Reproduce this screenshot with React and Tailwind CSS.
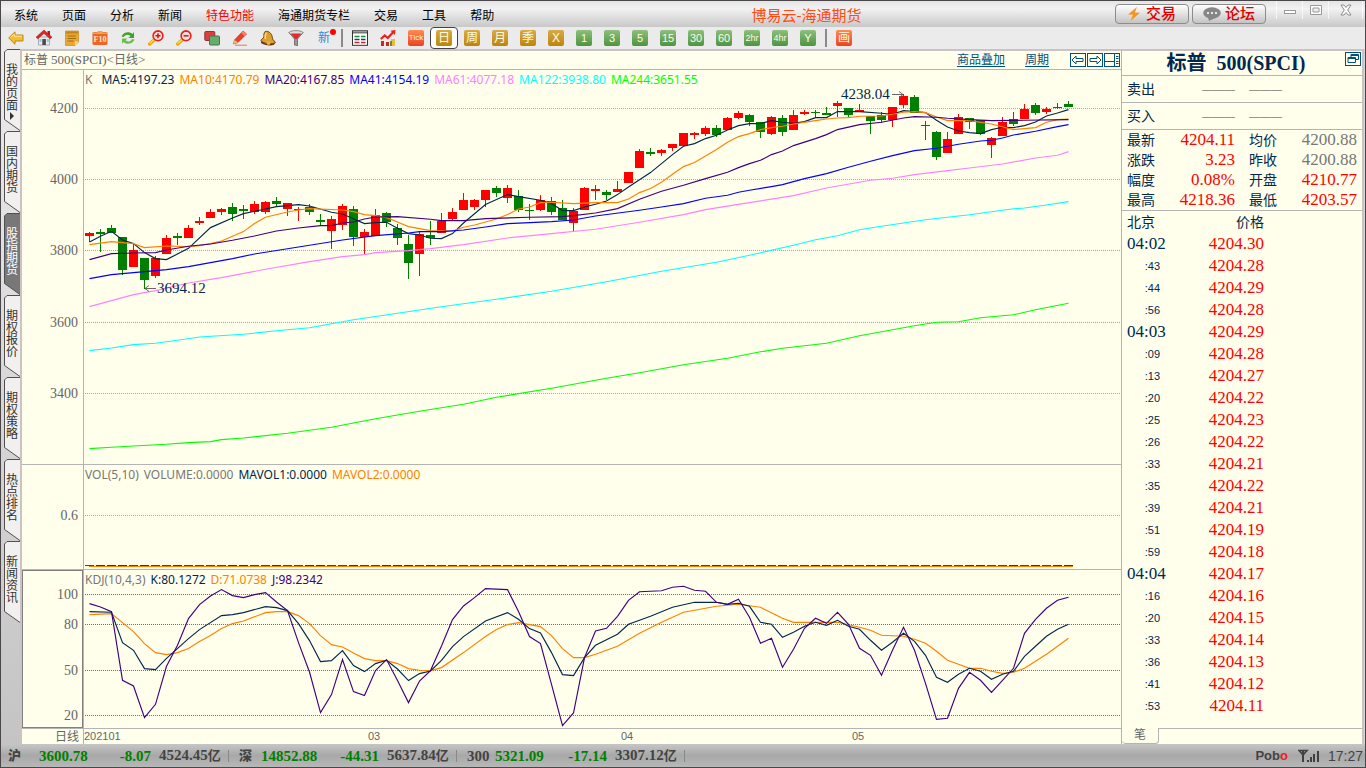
import React from "react";

const MENU = ["系统", "页面", "分析", "新闻", "特色功能", "海通期货专栏", "交易", "工具", "帮助"];

// [direction, body top, body bottom, high, low]
const CANDLES = [
  ["r", 233, 236, 232, 242], ["g", 232, 234, 229, 252], ["g", 228, 233, 225, 233], ["g", 237, 270, 237, 275],
  ["r", 250, 267, 244, 267], ["g", 258, 280, 258, 289], ["r", 258, 276, 256, 278], ["r", 238, 254, 235, 254],
  ["g", 236, 238, 233, 245], ["r", 228, 238, 225, 238], ["r", 221, 223, 217, 225], ["r", 212, 218, 209, 218],
  ["r", 209, 212, 208, 215], ["g", 207, 214, 203, 221], ["g", 209, 211, 205, 219], ["r", 204, 212, 201, 214],
  ["r", 202, 212, 201, 214], ["g", 201, 204, 197, 207], ["r", 203, 209, 203, 216], ["r", 209, 210, 207, 221],
  ["g", 207, 212, 204, 215], ["g", 220, 222, 214, 226], ["r", 219, 231, 216, 249], ["r", 206, 225, 204, 230],
  ["g", 209, 237, 206, 246], ["r", 232, 237, 229, 254], ["r", 215, 236, 209, 236], ["g", 213, 222, 212, 227],
  ["g", 228, 238, 224, 245], ["g", 244, 263, 235, 279], ["r", 234, 254, 232, 276], ["g", 235, 238, 221, 245],
  ["r", 221, 233, 213, 233], ["r", 212, 219, 208, 220], ["r", 200, 210, 193, 210], ["r", 200, 207, 199, 210],
  ["r", 190, 200, 190, 207], ["g", 188, 193, 186, 197], ["r", 188, 198, 185, 203], ["g", 196, 210, 190, 212],
  ["g", 210, 211, 204, 220], ["r", 200, 210, 195, 211], ["g", 201, 212, 197, 215], ["g", 208, 220, 200, 220],
  ["r", 211, 223, 208, 232], ["r", 188, 210, 187, 210], ["r", 189, 191, 185, 200], ["g", 192, 195, 190, 200],
  ["r", 189, 192, 181, 192], ["r", 172, 183, 172, 183], ["r", 151, 168, 149, 168], ["g", 152, 154, 148, 156],
  ["r", 150, 153, 149, 156], ["r", 144, 148, 144, 151], ["r", 133, 146, 133, 146], ["r", 133, 135, 132, 139],
  ["r", 128, 134, 126, 136], ["g", 128, 135, 125, 137], ["r", 118, 130, 117, 130], ["r", 113, 118, 111, 119],
  ["g", 115, 122, 114, 126], ["g", 122, 132, 122, 138], ["r", 117, 134, 116, 135], ["g", 118, 132, 115, 136],
  ["r", 115, 130, 110, 130], ["r", 112, 114, 110, 115], ["g", 112, 113, 110, 117], ["g", 113, 115, 107, 115],
  ["r", 103, 106, 101, 117], ["g", 108, 115, 108, 117], ["r", 110, 112, 104, 112], ["g", 116, 121, 116, 134],
  ["g", 115, 120, 112, 123], ["r", 107, 120, 107, 127], ["r", 96, 105, 94, 108], ["g", 97, 113, 95, 113],
  ["r", 125, 126, 121, 140], ["g", 132, 157, 131, 160], ["r", 139, 153, 132, 153], ["r", 117, 134, 114, 134],
  ["g", 118, 122, 118, 129], ["g", 120, 134, 120, 135], ["r", 138, 145, 137, 158], ["r", 122, 136, 117, 136],
  ["g", 119, 124, 112, 126], ["r", 109, 119, 104, 119], ["g", 105, 113, 103, 115], ["r", 109, 112, 107, 114],
  ["g", 107, 108, 103, 109], ["g", 104, 107, 101, 107],
];

// Series as "bar:y" pairs
const MA5 = "0:241.7 1:236 2:231 3:239.7 4:243.3 5:252.3 6:258.3 7:259.3 9:248 11:227.3 13:217.7 14:213.3 16:208.7 17:206.3 19:204.3 20:205.7 22:212 23:213.7 25:223.3 26:222.3 27:222 28:228 29:233.3 30:234.7 31:238 32:238.3 33:233.3 34:222.7 36:204.3 38:194.3 39:196.3 41:200 42:203.3 43:210.3 44:210.3 45:206.7 46:204 47:200.7 48:194.3 49:186.7 51:172.3 53:154.3 54:146 55:143.3 56:138.3 57:135 58:129.7 59:125.3 60:123.3 61:123.3 62:120.3 63:122 64:123 65:121.3 66:117.3 67:117.3 68:111.3 70:111.3 72:113 73:114 74:110.3 75:111.3 76:112.3 77:120 78:126.7 79:130.7 80:132.3 81:133.3 82:129.3 83:127 84:127.3 85:125.3 86:121.7 87:115.7 88:112.7 89:109.3";
const MA10 = "0:244.3 2:241.3 3:242.3 4:243.3 5:247.3 7:245.7 9:246.3 10:245.3 11:243.3 12:240.7 14:231.3 15:223.3 16:217 18:211.7 19:209.7 20:208.3 23:209.7 24:211.3 25:214.3 26:215.3 27:217.3 28:221.7 29:226.3 31:230.3 33:230.7 34:227 35:224.7 37:218.7 38:214.3 39:208.7 40:206.7 41:202.3 42:202 44:203.3 46:202.3 48:202.3 49:198.7 50:192.3 51:188.3 52:182 53:174 54:166.3 55:162.3 57:149.3 58:142 59:136.3 60:133.3 61:129.3 62:127.3 63:126 64:123.7 66:120.3 67:118.7 68:117.7 69:117.3 70:116 72:115.7 73:114 74:112 75:111.3 76:112.3 77:116.7 78:120.3 80:120.3 82:123.7 84:129.3 86:127.3 87:122 88:119.3 89:118.7";
const MA20 = "0:259.3 2:253.3 4:252.7 6:252.3 7:249.7 9:246 11:243.7 13:240 15:235.7 17:230.7 19:227.7 21:225.3 22:225.3 23:222.7 24:221.7 25:218.7 26:216.7 28:216.3 31:219 32:220.3 34:220.3 36:218.3 40:217 43:216.3 44:215.3 46:212.7 48:208.3 50:199 52:191 54:185 56:178.3 58:172 59:167.3 60:163.3 61:160 62:154.3 63:150.7 64:145.3 66:138.3 67:134.3 68:129.3 70:124.3 72:122 74:117.7 75:116.3 77:117 78:118 80:119.3 82:120.3 85:120 89:119.3";
const MA41 = "0:278.3 2:274.3 5:271.3 7:269.3 9:266.3 13:258.3 15:253.7 19:246.7 23:239.7 26:235.3 29:232.7 30:231.3 32:231.3 34:229.7 36:226.7 38:223.3 42:221.3 44:219.7 46:215.7 50:210 52:206.7 54:203.3 56:198 58:195 59:192 60:190 62:186.3 63:184.3 65:178.3 67:173.3 69:167 71:161 73:155.3 75:150.3 77:148 79:144 81:140.7 82:140 83:137.7 84:134.7 86:131 88:126.3 89:124.3";
const MA61 = "0:306.3 2:300.3 4:294.3 6:290.3 9:282.7 12:277.3 16:269 20:261.3 23:256.3 25:254.3 26:252.3 29:250.3 31:248.3 34:244.3 38:237.7 42:233.3 46:229 50:222 54:214.3 56:209.3 60:202.3 64:195.3 67:187.7 71:180 73:178 75:174.3 78:170.3 80:167.7 83:163.7 86:157.7 88:155 89:151.3";
const MA122 = "0:350.3 2:347.7 4:344.3 6:343 8:340 10:336.7 14:334 17:330.5 20:327.5 24:319.5 28:313 32:306.5 37:299 42:291 47:281.5 52:271 57:262 60:255 64:245 66:239.5 68:235.5 70:229.5 72:226 76:219.5 80:214.5 84:208.5 85:207.7 87:204.7 89:201.3";
const MA244 = "0:448.3 2:447 4:445.7 7:444 9:442.3 11:441.3 12:439.3 14:437.7 18:433 22:427 26:418.5 30:411 34:404 37:397 42:388 47:378 50:372.5 54:364.5 58:358 61:351.5 63:348 67:343 70:335.5 75:325.5 77:322 79:321.5 81:317.5 84:314.5 86:309.5 89:303";
const K = "0:611.3 2:612 3:642.3 4:650 5:668.3 6:669.3 7:658 9:638.3 10:629.3 12:615.3 13:614.3 14:612.3 16:606.3 17:607.3 18:610.3 19:623.3 20:640.3 21:661.3 22:660.3 23:650.3 24:665.3 25:671.3 26:663.3 27:660 28:668.7 29:680.3 30:673.3 31:670.7 32:660 33:646.3 34:636.3 36:620.7 38:612.3 39:619 40:628.3 41:632.7 42:652.3 43:674.3 44:675.3 45:657.3 46:645 48:634 49:624 51:616 53:607 55:602 57:602 58:604 59:603 60:606 61:622 62:624 63:637 64:632 65:626 66:622 67:625 68:620 69:626 70:629 71:640 72:650 73:642 74:633 75:641 76:655 77:677 78:682 79:674 80:668 81:671 82:679 83:674 84:671 85:656 86:646 87:636 88:629 89:624";
const D = "0:614.3 2:613.3 3:622.3 4:631.3 5:643.3 6:652.3 7:654.3 8:652.3 9:648.3 10:641.3 11:635.3 12:628.3 13:623.3 14:620.7 16:612.3 17:611.3 18:611.3 19:615.3 20:623.3 21:635.3 22:644.3 23:646.7 24:652.7 25:658.3 26:660.3 27:660.3 28:663.3 29:668.3 30:670 31:670.3 32:667.3 34:652.3 36:636.3 37:629.3 38:624.3 39:622.3 40:624.3 41:626.3 42:635.3 43:648.3 44:657.3 45:657.3 46:654 48:646 50:633 52:622 54:612 57:606 59:604 61:607 63:618 64:622 66:622 68:622 70:627 71:630 72:635 74:636 75:639 76:643 77:651 78:660 79:664 80:668 81:668 82:671 83:673 84:672 85:668 86:661 87:654 88:646 89:638";
const J = "0:603.3 1:606.7 2:611.3 3:680 4:685.7 5:717.3 6:704 7:666 8:645 9:618.3 10:604.3 11:595.7 12:589.3 13:595.3 14:597.3 15:594.3 16:592.3 17:601.7 18:610.3 19:642.3 20:671.7 21:712.3 22:694.3 23:659.3 24:691.3 25:695.3 26:670.3 27:659.3 28:680.3 29:702.3 30:680.7 31:670.3 32:645.7 33:619.3 34:605.7 35:597.3 36:588.3 38:589.3 39:611.3 40:636.3 41:643.3 42:684 43:725.3 44:712.7 45:657.3 46:630.7 47:628 48:616 49:600 50:591.5 52:590.5 53:587 54:586 55:590 56:591 57:602 58:604 59:599 60:617 61:643 62:638 63:667 64:649 65:628 66:618 67:623 68:612 69:624 70:648 71:655 72:675 73:650 74:627 75:650 76:683 77:719 78:718 79:688 80:672 81:680 82:692 83:680 84:668 85:633 86:619 87:608 88:600 89:597";

const toPoints = (series) =>
  series
    .split(" ")
    .map((p) => {
      const [i, y] = p.split(":");
      return `${67.5 + 11 * Number(i)},${Number(y) + 0.3}`;
    })
    .join(" ");

const NAVY = "#002850";

function Line({ series, color }) {
  return <polyline points={toPoints(series)} fill="none" stroke={color} strokeWidth="1.15" />;
}

function Grid({ y, label, dark }) {
  return (
    <g>
      <line x1="63" x2="100%" y1={y + 0.5} y2={y + 0.5} stroke={dark ? "#707070" : "#a8a8a8"} strokeDasharray="1 1" shapeRendering="crispEdges" />
      <text x="56" y={y + 5} textAnchor="end" fontSize="14" fill="#666">{label}</text>
    </g>
  );
}

function Panel({ top, heightClass, legend, children, label }) {
  return (
    <section aria-label={label} className={`relative ${heightClass}`}>
      <svg className="block h-full w-full font-['Liberation_Serif','Noto_Sans_CJK_SC',serif]">
        <line x1="61.5" x2="61.5" y1="0" y2="100%" stroke="#b4b4b4" />
        <g transform={`translate(0 ${-top})`}>{children}</g>
      </svg>
      <div className="absolute left-[63px] top-0.5 flex gap-[5px] whitespace-nowrap font-['Noto_Sans',sans-serif] text-[12px] leading-4">
        {legend.map(([t, c]) => (
          <span key={t} className={c}>{t}</span>
        ))}
      </div>
    </section>
  );
}

const SIDE = ["我的页面", "国内期货", "股指期货", "期权报价", "期权策略", "热点排名", "新闻资讯"];

function SideTab({ name, active, arrow }) {
  return (
    <button className={`relative flex h-[82px] w-full flex-col items-center pl-[3px] pt-[15px] text-[12px] leading-3 ${arrow ? "-mt-1" : ""} ${active ? "text-white" : "text-[#333]"}`}>
      <svg className="absolute inset-0 h-[82px] w-[19px]" viewBox="0 0 19 82">
        <path d="M19 .5H6L3.500 3V70.500L19 81.500Z" fill={active ? "#787878" : "#f1f0ee"} />
        <path d="M19 .5H6L3.500 3V70.500L19 81.500" fill="none" stroke="#505050" />
      </svg>
      <span className="relative flex flex-col">
        {[...name].map((c) => (
          <span key={c}>{c}</span>
        ))}
      </span>
      {arrow && <svg className="relative h-2 w-2" viewBox="0 0 8 8"><path d="M2 0l4 4-4 4z" fill="#333" /></svg>}
    </button>
  );
}

const gold = "bg-linear-to-b from-[#d6ab45] to-[#bd8500]";
const green = "bg-linear-to-b from-[#8cc07c] to-[#4d9440]";
const red = "bg-linear-to-b from-[#ff8a50] to-[#ec4022]";
const BADGES = [
  ["Tick", red, "text-[8px]"], ["日", gold, "text-[12px]"], ["周", gold, "text-[12px]"], ["月", gold, "text-[12px]"],
  ["季", gold, "text-[12px]"], ["X", gold, "text-[12px]"], ["1", green, "text-[11px]"], ["3", green, "text-[11px]"],
  ["5", green, "text-[11px]"], ["15", green, "text-[11px]"], ["30", green, "text-[11px]"], ["60", green, "text-[11px]"],
  ["2hr", green, "text-[9px]"], ["4hr", green, "text-[9px]"], ["Y", green, "text-[11px]"],
];

function Badge({ text, tone, size, active }) {
  return (
    <button className={`flex h-[22px] w-7 items-center justify-center ${active ? "rounded border border-[#444] bg-white" : ""}`}>
      <span className={`flex h-4 w-4 items-center justify-center rounded-xs leading-none text-[#fffbe0] ${tone} ${size}`}>{text}</span>
    </button>
  );
}

function Tool({ label, children }) {
  return (
    <button aria-label={label} className="flex h-[22px] w-7 items-center justify-center">
      <svg className="h-4 w-4" viewBox="0 0 16 16">{children}</svg>
    </button>
  );
}

const Sep = () => <span className="mx-[3px] h-[18px] w-0.5 bg-[#8a8a8a]" />;

function Magnifier({ plus }) {
  return (
    <g>
      <path d="M6.500 9.500L1.700 14" stroke="#eda800" strokeWidth="3.400" strokeLinecap="round" />
      <path d="M6.200 9.200L2 13.200" stroke="#ffdc50" strokeWidth="1.200" strokeLinecap="round" />
      <circle cx="10" cy="5.800" r="4.800" fill="#fff" stroke="#e5241c" strokeWidth="1.800" />
      <circle cx="10" cy="5.800" r="3.300" fill="#fbdcd8" />
      <path d={plus ? "M7.500 5.800h5M10 3.300v5" : "M7.500 5.800h5"} stroke="#d41410" strokeWidth="1.500" />
    </g>
  );
}

function Toolbar() {
  return (
    <div className="flex h-[22px] items-center bg-[#ebebeb] pl-px">
      <Tool label="后退">
        <path d="M.7 8L7 1.800V5h8v6H7v3.200z" fill="#f6bd30" stroke="#bf841a" strokeWidth="1" />
        <path d="M2.500 7.700L6.200 4v2.200H14" stroke="#ffe89a" fill="none" />
      </Tool>
      <Tool label="主页">
        <path d="M2.500 7h11v8h-11z" fill="#e8edef" stroke="#889099" strokeWidth=".7" />
        <path d="M11.500 1h2.500v5h-2.500z" fill="#b81914" />
        <path d="M8 0L0 7.200l1.800 1.600L8 3.500l6.200 5.300L16 7.200z" fill="#d82720" stroke="#9b1714" strokeWidth=".5" />
        <path d="M6.300 9h3.600v6H6.300z" fill="#4b4a54" />
        <path d="M3.500 9h2v3h-2zM10.800 9h2v3h-2z" fill="#9ac2dc" />
      </Tool>
      <Tool label="笔记">
        <path d="M1.500 1h13v11L11 15.500H1.500z" fill="#e9a830" stroke="#c88718" strokeWidth=".7" />
        <path d="M2 1.500h12v2H2z" fill="#c68418" />
        <path d="M3.500 6h8.500M3.500 8.500h8.500M3.500 11h6" stroke="#a66a15" />
        <path d="M14.500 11.500H11v4z" fill="#ffdc86" />
      </Tool>
      <Tool label="F10">
        <rect x=".5" y="2" width="15" height="13" rx="1.500" fill="#ed6529" />
        <path d="M.5 4V2.500h5V1h5v1.500h5V4z" fill="#f2a64c" />
        <text x="8" y="12" textAnchor="middle" fontSize="8" fontWeight="700" fill="#ffe9ad" className="font-['Liberation_Serif',serif]">F10</text>
      </Tool>
      <Tool label="刷新">
        <path d="M1.500 6.500C3.500 1.500 9.500 1 12.500 4L14 2v6H8.500l2-2C8.500 4 5 4.300 4 7z" fill="#3fa329" />
        <path d="M14.500 9.500c-2 5-8 5.500-11 2.500L2 14V8.500h5.500l-2 1.800C7.500 12 11 12 12 9z" fill="#6cc04a" />
      </Tool>
      <Tool label="放大"><Magnifier plus /></Tool>
      <Tool label="缩小"><Magnifier /></Tool>
      <Tool label="叠加">
        <rect x=".8" y="1.500" width="10" height="9" rx="1" fill="#dd3d3d" stroke="#8b3538" />
        <rect x="5.500" y="6" width="10" height="9" rx="1" fill="#65ad6c" stroke="#4a7354" />
      </Tool>
      <Tool label="画线">
        <path d="M11 1l3.500 3L6 12.500 1.500 14l1-4z" fill="#e94225" stroke="#a92c18" strokeWidth=".6" />
        <path d="M11 1l3.500 3-2 2L9 2.800z" fill="#ff8068" />
        <path d="M2.500 10L6 12.500 1.500 14z" fill="#e7bd78" />
        <path d="M3 15.200h12" stroke="#e57462" />
      </Tool>
      <Tool label="预警">
        <path d="M5 1.500C9 .5 12.500 4 12.500 9l3 3.500C12 15 4 14 .8 10.500L4 7c-.5-2 0-4 1-5.500z" fill="#dda02e" stroke="#6d3511" strokeWidth=".9" />
        <path d="M6 3c-1 2-1 4-.5 6" stroke="#ffe28a" fill="none" strokeWidth="1.500" />
        <path d="M1 11c3 3 10 4 14 1.800l-1 2c-4 1.500-10 .5-13-1.800z" fill="#6a2e10" />
        <circle cx="8.500" cy="13" r="2" fill="#e1b14c" />
      </Tool>
      <Tool label="过滤">
        <path d="M1 2.500L6.500 9v6l3 .8V9L15 2.500z" fill="#999" stroke="#555" strokeWidth=".7" />
        <ellipse cx="8" cy="2.800" rx="7" ry="2.200" fill="#ddd" stroke="#666" strokeWidth=".7" />
        <path d="M3 3.500h10L8.800 9H7.200z" fill="#e52929" />
      </Tool>
      <button className="relative flex h-[22px] w-7 items-center justify-center text-[12px] leading-none text-[#2b8be6]">
        新
        <i className="absolute right-0.5 top-0.5 h-1.5 w-1.5 rounded-full bg-[#f00]" />
      </button>
      <Sep />
      <Tool label="报价表">
        <rect x=".5" y=".8" width="15" height="14.500" fill="#fff" stroke="#333" />
        <path d="M1 2.500h14" stroke="#777" strokeWidth="2" />
        <path d="M2.500 6.500h5M9 6.500h4.500" stroke="#109030" strokeWidth="1.500" />
        <path d="M2.500 9.500h5M9 9.500h4.500" stroke="#303080" strokeWidth="1.500" />
        <path d="M2.500 12.500h5M9 12.500h4.500" stroke="#d52020" strokeWidth="1.500" />
      </Tool>
      <Tool label="走势">
        <path d="M1 11h3v5H1zM6 12h3v4H6z" fill="#c52923" />
        <path d="M11 9h4v7h-4z" fill="#e9be3d" />
        <path d="M10 11h2v5h-2z" fill="#57933a" />
        <path d="M.8 9l4-3.500 3 2.500 6-6.500" fill="none" stroke="#ea211c" strokeWidth="2.200" />
        <path d="M10.500.8L15.500 0 15 5z" fill="#ea211c" />
      </Tool>
      {BADGES.map(([t, tone, size]) => (
        <Badge key={t} text={t} tone={tone} size={size} active={t === "日"} />
      ))}
      <Sep />
      <Badge text="画" tone={red} size="text-[12px]" />
    </div>
  );
}

function TitleBar() {
  return (
    <header className="flex h-[26px] items-center bg-linear-to-b from-[#e4e4e4] via-[#f2f2f2] via-30% to-[#c8c8c8] pl-[13px]">
      <nav className="flex gap-6 whitespace-nowrap pt-1 text-[12px] leading-4 text-black">
        {MENU.map((m) => (
          <a key={m} href="#" className={m === "特色功能" ? "text-[#f00]" : ""}>{m}</a>
        ))}
      </nav>
      <h1 className="flex-1 pl-1 pt-1 text-center text-[15px] leading-5 text-[#ff4b12]">博易云-海通期货</h1>
      <div className="flex gap-[3px] text-[15px] font-medium leading-4 text-[#e00000]">
        <button className="flex h-5 w-[74px] items-center justify-center gap-1.5 rounded border border-[#8c8c8c] bg-linear-to-b from-white to-[#c4c4c4]">
          <svg className="h-3.5 w-3" viewBox="0 0 12 14"><path d="M9 0L0 7.500l5 .2L2.500 14 12 5.800 6.800 5.500z" fill="#f5941f" /></svg>
          交易
        </button>
        <button className="flex h-5 w-[74px] items-center justify-center gap-1 rounded border border-[#8c8c8c] bg-linear-to-b from-white to-[#c4c4c4]">
          <svg className="h-3.5 w-[18px]" viewBox="0 0 18 14">
            <ellipse cx="9" cy="6" rx="8.800" ry="5.800" fill="#868686" />
            <path d="M5 10l1 4 6-3z" fill="#868686" />
            <circle cx="5" cy="6" r="1.100" fill="#fff" /><circle cx="9" cy="6" r="1.100" fill="#fff" /><circle cx="13" cy="6" r="1.100" fill="#fff" />
          </svg>
          论坛
        </button>
      </div>
      <div className="ml-2.5 mr-0.5 flex h-[18px] self-start">
        <button aria-label="最小化" className="flex w-[26px] items-center justify-center border-l border-white/70">
          <svg className="h-3 w-3" viewBox="0 0 12 12"><rect x=".5" y="6.500" width="11" height="3" fill="#fff" stroke="#999" /></svg>
        </button>
        <button aria-label="最大化" className="flex w-[26px] items-center justify-center border-l border-white/70">
          <svg className="h-3 w-3" viewBox="0 0 12 12"><path d="M.5 1.500h11v9H.5zM3 4h6v4H3z" fill="#fff" fillRule="evenodd" stroke="#999" /></svg>
        </button>
        <button aria-label="关闭" className="flex w-[35px] items-center justify-center border-x border-white/70">
          <svg className="h-3 w-3" viewBox="0 0 12 12"><path d="M1 1h3l2 2.500L8 1h3L7.700 6l3.300 5H8L6 8.500 4 11H1l3.300-5z" fill="#fff" stroke="#8c8c8c" /></svg>
        </button>
      </div>
    </header>
  );
}

function ChartArea() {
  return (
    <div className="min-w-0 flex-1 overflow-hidden">
      <div className="flex h-[19px] items-center border-b border-[#b4b4b4] pl-0.5 pr-px text-[12px] leading-4">
        <h2 className="flex-1 font-['Liberation_Serif','Noto_Sans_CJK_SC',serif] text-[#666]">标普 <span className="text-[13px]">500(SPCI)&lt;</span>日线<span className="text-[13px]">&gt;</span></h2>
        <a href="#" className="mr-5 text-[#005082] underline underline-offset-2">商品叠加</a>
        <a href="#" className="mr-[21px] text-[#005082] underline underline-offset-2">周期</a>
        <div className="flex gap-px">
          {[
            ["上一品种", "M2 7l4-4v2.500h7v3H6V11z"],
            ["下一品种", "M14 7l-4-4v2.500H3v3h7V11z"],
            ["布局", "M0 8.500h10M10.500 0v14M12 3.500h2.500M12 5.500h2.500M12 8.500h2.500M12 10.500h2.500"],
          ].map(([n, d]) => (
            <button key={n} aria-label={n}>
              <svg className="block h-3.5 w-4" viewBox="0 0 16 14">
                <rect x=".5" y=".5" width="15" height="13" fill="none" stroke="#005082" />
                <path d={d} fill="none" stroke="#005082" />
              </svg>
            </button>
          ))}
        </div>
      </div>

      <Panel
        label="K线"
        top={70}
        heightClass="h-[395px] border-b border-[#b4b4b4]"
        legend={[
          ["K", "mr-1 text-[#777]"], ["MA5:4197.23", "text-[#002850]"], ["MA10:4170.79", "text-[#ff8000]"], ["MA20:4167.85", "text-[#400080]"],
          ["MA41:4154.19", "text-[#0000ff]"], ["MA61:4077.18", "text-[#ff80ff]"], ["MA122:3938.80", "text-[#00ffff]"], ["MA244:3651.55", "text-[#00ff00]"],
        ]}
      >
        <Grid y={108} label="4200" /><Grid y={179} label="4000" /><Grid y={250} label="3800" />
        <Grid y={322} label="3600" /><Grid y={393} label="3400" />
        {CANDLES.map(([d, t, b, h, l], i) => (
          <g key={i} fill={d === "r" ? "#ff0000" : "#008000"} shapeRendering="crispEdges">
            <rect x={67 + 11 * i} y={h} width="1" height={l - h} />
            <rect x={63 + 11 * i} y={t} width="9" height={b - t} />
          </g>
        ))}
        <Line series={MA5} color={NAVY} />
        <Line series={MA10} color="#ff8000" />
        <Line series={MA20} color="#400080" />
        <Line series={MA41} color="#0000ff" />
        <Line series={MA61} color="#ff80ff" />
        <Line series={MA122} color="#00ffff" />
        <Line series={MA244} color="#00ff00" />
        <path d="M134 288.500h-11M127 285.500l-4 3 4 3M870 94.500h11M877 91.500l4 3-4 3" fill="none" stroke="#666" />
        <text x="135" y="293" fontSize="15" fill={NAVY}>3694.12</text>
        <text x="819" y="99" fontSize="15" fill={NAVY}>4238.04</text>
      </Panel>

      <Panel
        label="成交量"
        top={465}
        heightClass="h-[105px] border-b border-[#b4b4b4]"
        legend={[["VOL(5,10)", "text-[#777]"], ["VOLUME:0.0000", "text-[#777]"], ["MAVOL1:0.0000", "text-[#002850]"], ["MAVOL2:0.0000", "text-[#ff8000]"]]}
      >
        <Grid y={515} label="0.6" />
        <g shapeRendering="crispEdges">
          <rect x="67" y="566" width="984" height="1" fill="#ff8000" />
          {CANDLES.map(([d], i) => (
            <rect key={i} x={63 + 11 * i} y="565" width="9" height="1" fill={d === "r" ? "#d01000" : "#006000"} />
          ))}
        </g>
      </Panel>

      <Panel
        label="KDJ"
        top={570}
        heightClass="h-[158px]"
        legend={[["KDJ(10,4,3)", "text-[#777]"], ["K:80.1272", "text-[#002850]"], ["D:71.0738", "text-[#ff8000]"], ["J:98.2342", "text-[#400080]"]]}
      >
        <rect x=".5" y="570.500" width="60" height="157" fill="none" stroke="#808080" />
        <Grid y={594} label="100" dark /><Grid y={624} label="80" dark /><Grid y={670} label="50" dark /><Grid y={715} label="20" dark />
        <Line series={D} color="#ff8000" />
        <Line series={K} color={NAVY} />
        <Line series={J} color="#400080" />
      </Panel>

      <svg className="block h-4 w-full border-t border-[#b4b4b4] font-['Liberation_Sans','Noto_Sans_CJK_SC',sans-serif] text-[11px]" fill="#666">
        <line x1="61.5" x2="61.5" y1="0" y2="15" stroke="#b4b4b4" />
        <text x="57" y="12" textAnchor="end" fontSize="12">日线</text>
        <text x="62" y="11">202101</text>
        <text x="346" y="11">03</text>
        <text x="599" y="11">04</text>
        <text x="830" y="11">05</text>
      </svg>
    </div>
  );
}

const QUOTE = [
  ["最新", "4204.11", "均价", "4200.88", false],
  ["涨跌", "3.23", "昨收", "4200.88", false],
  ["幅度", "0.08%", "开盘", "4210.77", true],
  ["最高", "4218.36", "最低", "4203.57", true],
];

const TICKS = [
  ["04:02", "4204.30"], [":43", "4204.28"], [":44", "4204.29"], [":56", "4204.28"], ["04:03", "4204.29"], [":09", "4204.28"],
  [":13", "4204.27"], [":20", "4204.22"], [":25", "4204.23"], [":26", "4204.22"], [":33", "4204.21"], [":35", "4204.22"],
  [":39", "4204.21"], [":51", "4204.19"], [":59", "4204.18"], ["04:04", "4204.17"], [":16", "4204.16"], [":20", "4204.15"],
  [":33", "4204.14"], [":36", "4204.13"], [":41", "4204.12"], [":53", "4204.11"],
];

function QuotePanel() {
  return (
    <aside className="flex w-[241px] shrink-0 flex-col border-l border-[#b4b4b4] text-[14px] text-[#002850]">
      <div className="relative flex h-[25px] items-center justify-center border-b border-[#b4b4b4] pr-3">
        <h2 className="font-['Liberation_Serif','Noto_Sans_CJK_SC',serif] text-[20px] font-bold leading-6">标普&nbsp; 500(SPCI)</h2>
        <button aria-label="切换窗口" className="absolute right-px top-px">
          <svg className="block h-3.5 w-4" viewBox="0 0 16 14" fill="none" stroke="#005082">
            <rect x=".5" y=".5" width="15" height="13" />
            <path d="M6 5V2.500h7.500v5H11M6 3.500h7.500M3 5.500h7.500v5H3zM3 6.500h7.500" />
          </svg>
        </button>
      </div>
      {["卖出", "买入"].map((n) => (
        <div key={n} className="flex h-[27px] items-center border-b border-[#b4b4b4] pl-[5px]">
          <span className="w-[75px]">{n}</span>
          <span className="w-[47px] font-['Liberation_Serif',serif] text-[11px] text-[#444]">———</span>
          <span className="font-['Liberation_Serif',serif] text-[11px] text-[#444]">———</span>
        </div>
      ))}
      <table className="w-full table-fixed border-b border-[#b4b4b4]">
        <colgroup><col className="w-[33px]" /><col className="w-20" /><col className="w-[42px]" /><col /></colgroup>
        <tbody>
          {QUOTE.map(([a, v, b, w, up]) => (
            <tr key={a} className="h-5 whitespace-nowrap leading-5">
              <th scope="row" className="p-0 pl-[5px] text-left font-normal">{a}</th>
              <td className="p-0 text-right font-['Liberation_Serif',serif] text-[17px] text-[#f00]">{v}</td>
              <th scope="row" className="p-0 pl-3.5 text-left font-normal">{b}</th>
              <td className={`p-0 pr-[5px] text-right font-['Liberation_Serif',serif] text-[17px] ${up ? "text-[#f00]" : "text-[#777]"}`}>{w}</td>
            </tr>
          ))}
        </tbody>
      </table>
      <table className="w-[142px] table-fixed leading-[22px]">
        <thead>
          <tr className="h-[22px]">
            <th className="w-[50px] p-0 pl-[5px] text-left font-normal">北京</th>
            <th className="p-0 text-right font-normal">价格</th>
          </tr>
        </thead>
        <tbody className="font-['Liberation_Serif',serif]">
          {TICKS.map(([t, p], i) => (
            <tr key={i} className="h-[22px]">
              <td className={t.length > 3 ? "p-0 pl-[5px] text-[17px]" : "p-0 pr-3 text-right font-['Liberation_Sans',sans-serif] text-[11px]"}>{t}</td>
              <td className="p-0 text-right text-[17px] text-[#f00]">{p}</td>
            </tr>
          ))}
        </tbody>
      </table>
      <div className="mt-auto flex h-4 text-[12px] leading-[15px] text-[#666]">
        <button className="w-[37px] rounded-b-sm border-b border-r border-[#b4b4b4]">笔</button>
        <span className="flex-1 border-t border-[#b4b4b4]" />
      </div>
    </aside>
  );
}

function Index({ name, value, change, amount, first, wide }) {
  return (
    <div className="flex items-center font-bold">
      <b className={first ? "w-[31px]" : wide ? "w-[22px]" : "w-7"}>{name}</b>
      <b className={`text-[#008000] ${wide ? "w-[70px]" : "w-16"}`}>{value}</b>
      <b className="w-12 text-right text-[#008000]">{change}</b>
      <span className="ml-2 w-[69px]">{amount}</span>
      <i className="mr-2.5 h-3 w-px bg-[#888]" />
    </div>
  );
}

function StatusBar() {
  return (
    <footer className="flex h-[23px] items-center whitespace-nowrap bg-linear-to-b from-[#c6c6c6] via-[#a8a8a8] to-[#b8b8b8] pl-[7px] pr-0.5 font-['Liberation_Serif','Noto_Sans_CJK_SC',serif] text-[15px] leading-5 text-[#444]">
      <Index first name={<span className="text-[13px]">沪</span>} value="3600.78" change="-8.07" amount={<>4524.45<span className="text-[13px]">亿</span></>} />
      <Index wide name={<span className="text-[13px]">深</span>} value="14852.88" change="-44.31" amount={<>5637.84<span className="text-[13px]">亿</span></>} />
      <Index name="300" value="5321.09" change="-17.14" amount={<>3307.12<span className="text-[13px]">亿</span></>} />
      <div className="ml-auto flex items-center font-['Liberation_Sans',sans-serif]">
        <b className="text-[13px]">Pob<span className="text-[#f02020]">o</span></b>
        <svg className="ml-2.5 h-3.5 w-[22px]" viewBox="0 0 22 14">
          <path d="M1 1.500h8L5 6z" fill="none" stroke="#404040" strokeWidth="1.600" />
          <path d="M5 2v11" stroke="#404040" strokeWidth="2" />
          <path d="M9 11h2v2H9zM12 8h2v5h-2zM15 5h2v8h-2zM19 2h2v11h-2z" fill="#404040" />
        </svg>
        <time className="ml-2 text-[14px]">17:27</time>
      </div>
    </footer>
  );
}

export default function App() {
  return (
    <div className="flex min-h-screen flex-col border border-[#4a464a] bg-[#d4d4d4] font-['Liberation_Sans','Noto_Sans_CJK_SC',sans-serif]">
      <TitleBar />
      <Toolbar />
      <main className="flex flex-1">
        <aside className="w-[19px] shrink-0 bg-linear-to-b from-[#ebebeb] to-[#c4c4c4] pt-1">
          {SIDE.map((s, i) => (
            <SideTab key={s} name={s} active={i === 2} arrow={i === 0} />
          ))}
        </aside>
        <div className="mr-px flex min-w-0 flex-1 border-x-2 border-t-2 border-[#ccc2c4] bg-[#ffffeb]">
          <ChartArea />
          <QuotePanel />
        </div>
      </main>
      <StatusBar />
    </div>
  );
}
